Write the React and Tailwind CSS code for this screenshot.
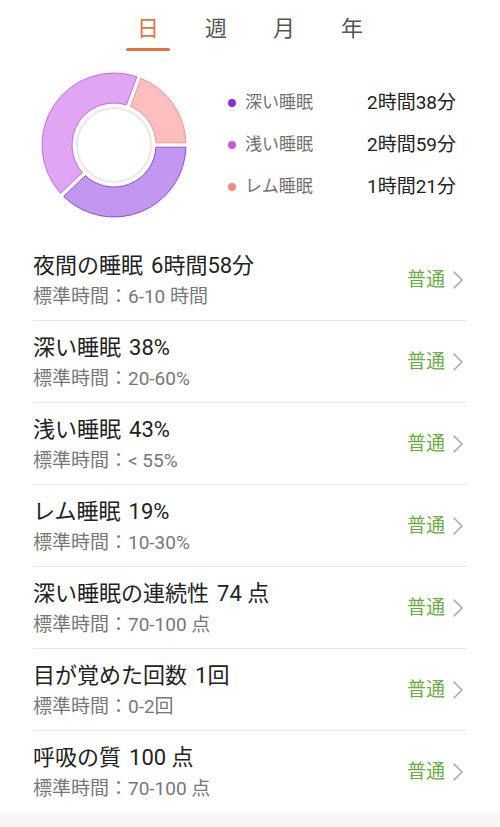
import React from 'react';

const font = { fontFamily: 'Roboto, "Noto Sans CJK JP", "Noto Sans", sans-serif' };

const tabs = ['日', '週', '月', '年'];

const legend = [
  { label: '深い睡眠', value: '2時間38分', dot: 'bg-[#8a2fe0]' },
  { label: '浅い睡眠', value: '2時間59分', dot: 'bg-[#c655e6]' },
  { label: 'レム睡眠', value: '1時間21分', dot: 'bg-[#f58a82]' },
];

const rows = [
  { title: '夜間の睡眠', value: '6時間58分', sub: '標準時間：6-10 時間' },
  { title: '深い睡眠', value: '38%', sub: '標準時間：20-60%' },
  { title: '浅い睡眠', value: '43%', sub: '標準時間：< 55%' },
  { title: 'レム睡眠', value: '19%', sub: '標準時間：10-30%' },
  { title: '深い睡眠の連続性', value: '74 点', sub: '標準時間：70-100 点' },
  { title: '目が覚めた回数', value: '1回', sub: '標準時間：0-2回' },
  { title: '呼吸の質', value: '100 点', sub: '標準時間：70-100 点' },
];

// annular sector with a constant-width gap at both ends
function sector(cx, cy, r0, r1, a0, a1, gap) {
  const rad = (d) => (d * Math.PI) / 180;
  const dOut = (Math.asin(gap / r1) * 180) / Math.PI;
  const dIn = (Math.asin(gap / r0) * 180) / Math.PI;
  const pt = (r, a) => [cx + r * Math.cos(rad(a)), cy + r * Math.sin(rad(a))];
  const [x1, y1] = pt(r1, a0 + dOut);
  const [x2, y2] = pt(r1, a1 - dOut);
  const [x3, y3] = pt(r0, a1 - dIn);
  const [x4, y4] = pt(r0, a0 + dIn);
  const large = a1 - a0 > 180 ? 1 : 0;
  return `M${x1} ${y1} A${r1} ${r1} 0 ${large} 1 ${x2} ${y2} L${x3} ${y3} A${r0} ${r0} 0 ${large} 0 ${x4} ${y4} Z`;
}

function Donut() {
  const total = 158 + 179 + 81;
  const deep = (158 / total) * 360;
  const light = (179 / total) * 360;
  const segs = [
    { a0: 0, a1: deep, fill: '#c197ef', stroke: '#9347dd' },
    { a0: deep, a1: deep + light, fill: '#e0a6f3', stroke: '#c46ae6' },
    { a0: deep + light, a1: 360, fill: '#fcbfbe', stroke: '#ef9791' },
  ];
  return (
    <svg width="150" height="150" viewBox="0 0 150 150">
      {segs.map((s, i) => (
        <path
          key={i}
          d={sector(75, 75, 42, 72, s.a0, s.a1, 2.2)}
          fill={s.fill}
          stroke={s.stroke}
          strokeWidth="1"
        />
      ))}
      <circle cx="75" cy="75" r="37" fill="#fff" stroke="#e8e8e8" strokeWidth="2" />
    </svg>
  );
}

function Chevron() {
  return (
    <svg width="12" height="20" viewBox="0 0 12 20" fill="none">
      <path d="M2 2 L10 10 L2 18" stroke="#a8a8a8" strokeWidth="1.6" strokeLinecap="round" strokeLinejoin="round" />
    </svg>
  );
}

export default function App() {
  return (
    <div className="min-h-[827px] bg-[#f6f6f6]" style={font}>
      <div className="bg-white pb-[1px]">
        {/* period tabs */}
        <div className="flex justify-center">
          {tabs.map((t, i) => (
            <div key={t} className="w-[68px] flex flex-col items-center pt-[13px]">
              <span className={`h-[32px] leading-[32px] text-[22px] ${i === 0 ? 'text-[#e8733a]' : 'text-[#555]'}`}>
                {t}
              </span>
              <div className={`mt-[3px] h-[3px] w-[44px] rounded-full ${i === 0 ? 'bg-[#e8733a]' : 'bg-transparent'}`} />
            </div>
          ))}
        </div>

        {/* chart + legend */}
        <div className="flex mt-[19px] ml-[39px]">
          <Donut />
          <div className="ml-[39px] pt-[12px]">
            {legend.map((l) => (
              <div key={l.label} className="flex items-center h-[42px]">
                <span className={`w-[8px] h-[8px] rounded-full ${l.dot}`} />
                <span className="ml-[9px] w-[122px] text-[17px] text-[#707070]">{l.label}</span>
                <span className="text-[19px] text-[#222]">{l.value}</span>
              </div>
            ))}
          </div>
        </div>

        {/* metrics */}
        <div className="mt-[19px] mx-[33px]">
          {rows.map((r, i) => (
            <div
              key={r.title}
              className={`flex items-center pt-[13px] pb-[12px] ${i < rows.length - 1 ? 'border-b border-[#e6e6e6]' : ''}`}
            >
              <div className="flex-1">
                <div className="h-[28px] leading-[28px] text-[22px] text-[#222]">
                  {r.title}
                  <span className="ml-[8px]">{r.value}</span>
                </div>
                <div className="mt-[6px] h-[22px] leading-[22px] text-[19px] text-[#777]">{r.sub}</div>
              </div>
              <span className="text-[19px] text-[#6aad45]">普通</span>
              <span className="ml-[7px] mr-[3px] flex items-center">
                <Chevron />
              </span>
            </div>
          ))}
        </div>
      </div>
    </div>
  );
}
